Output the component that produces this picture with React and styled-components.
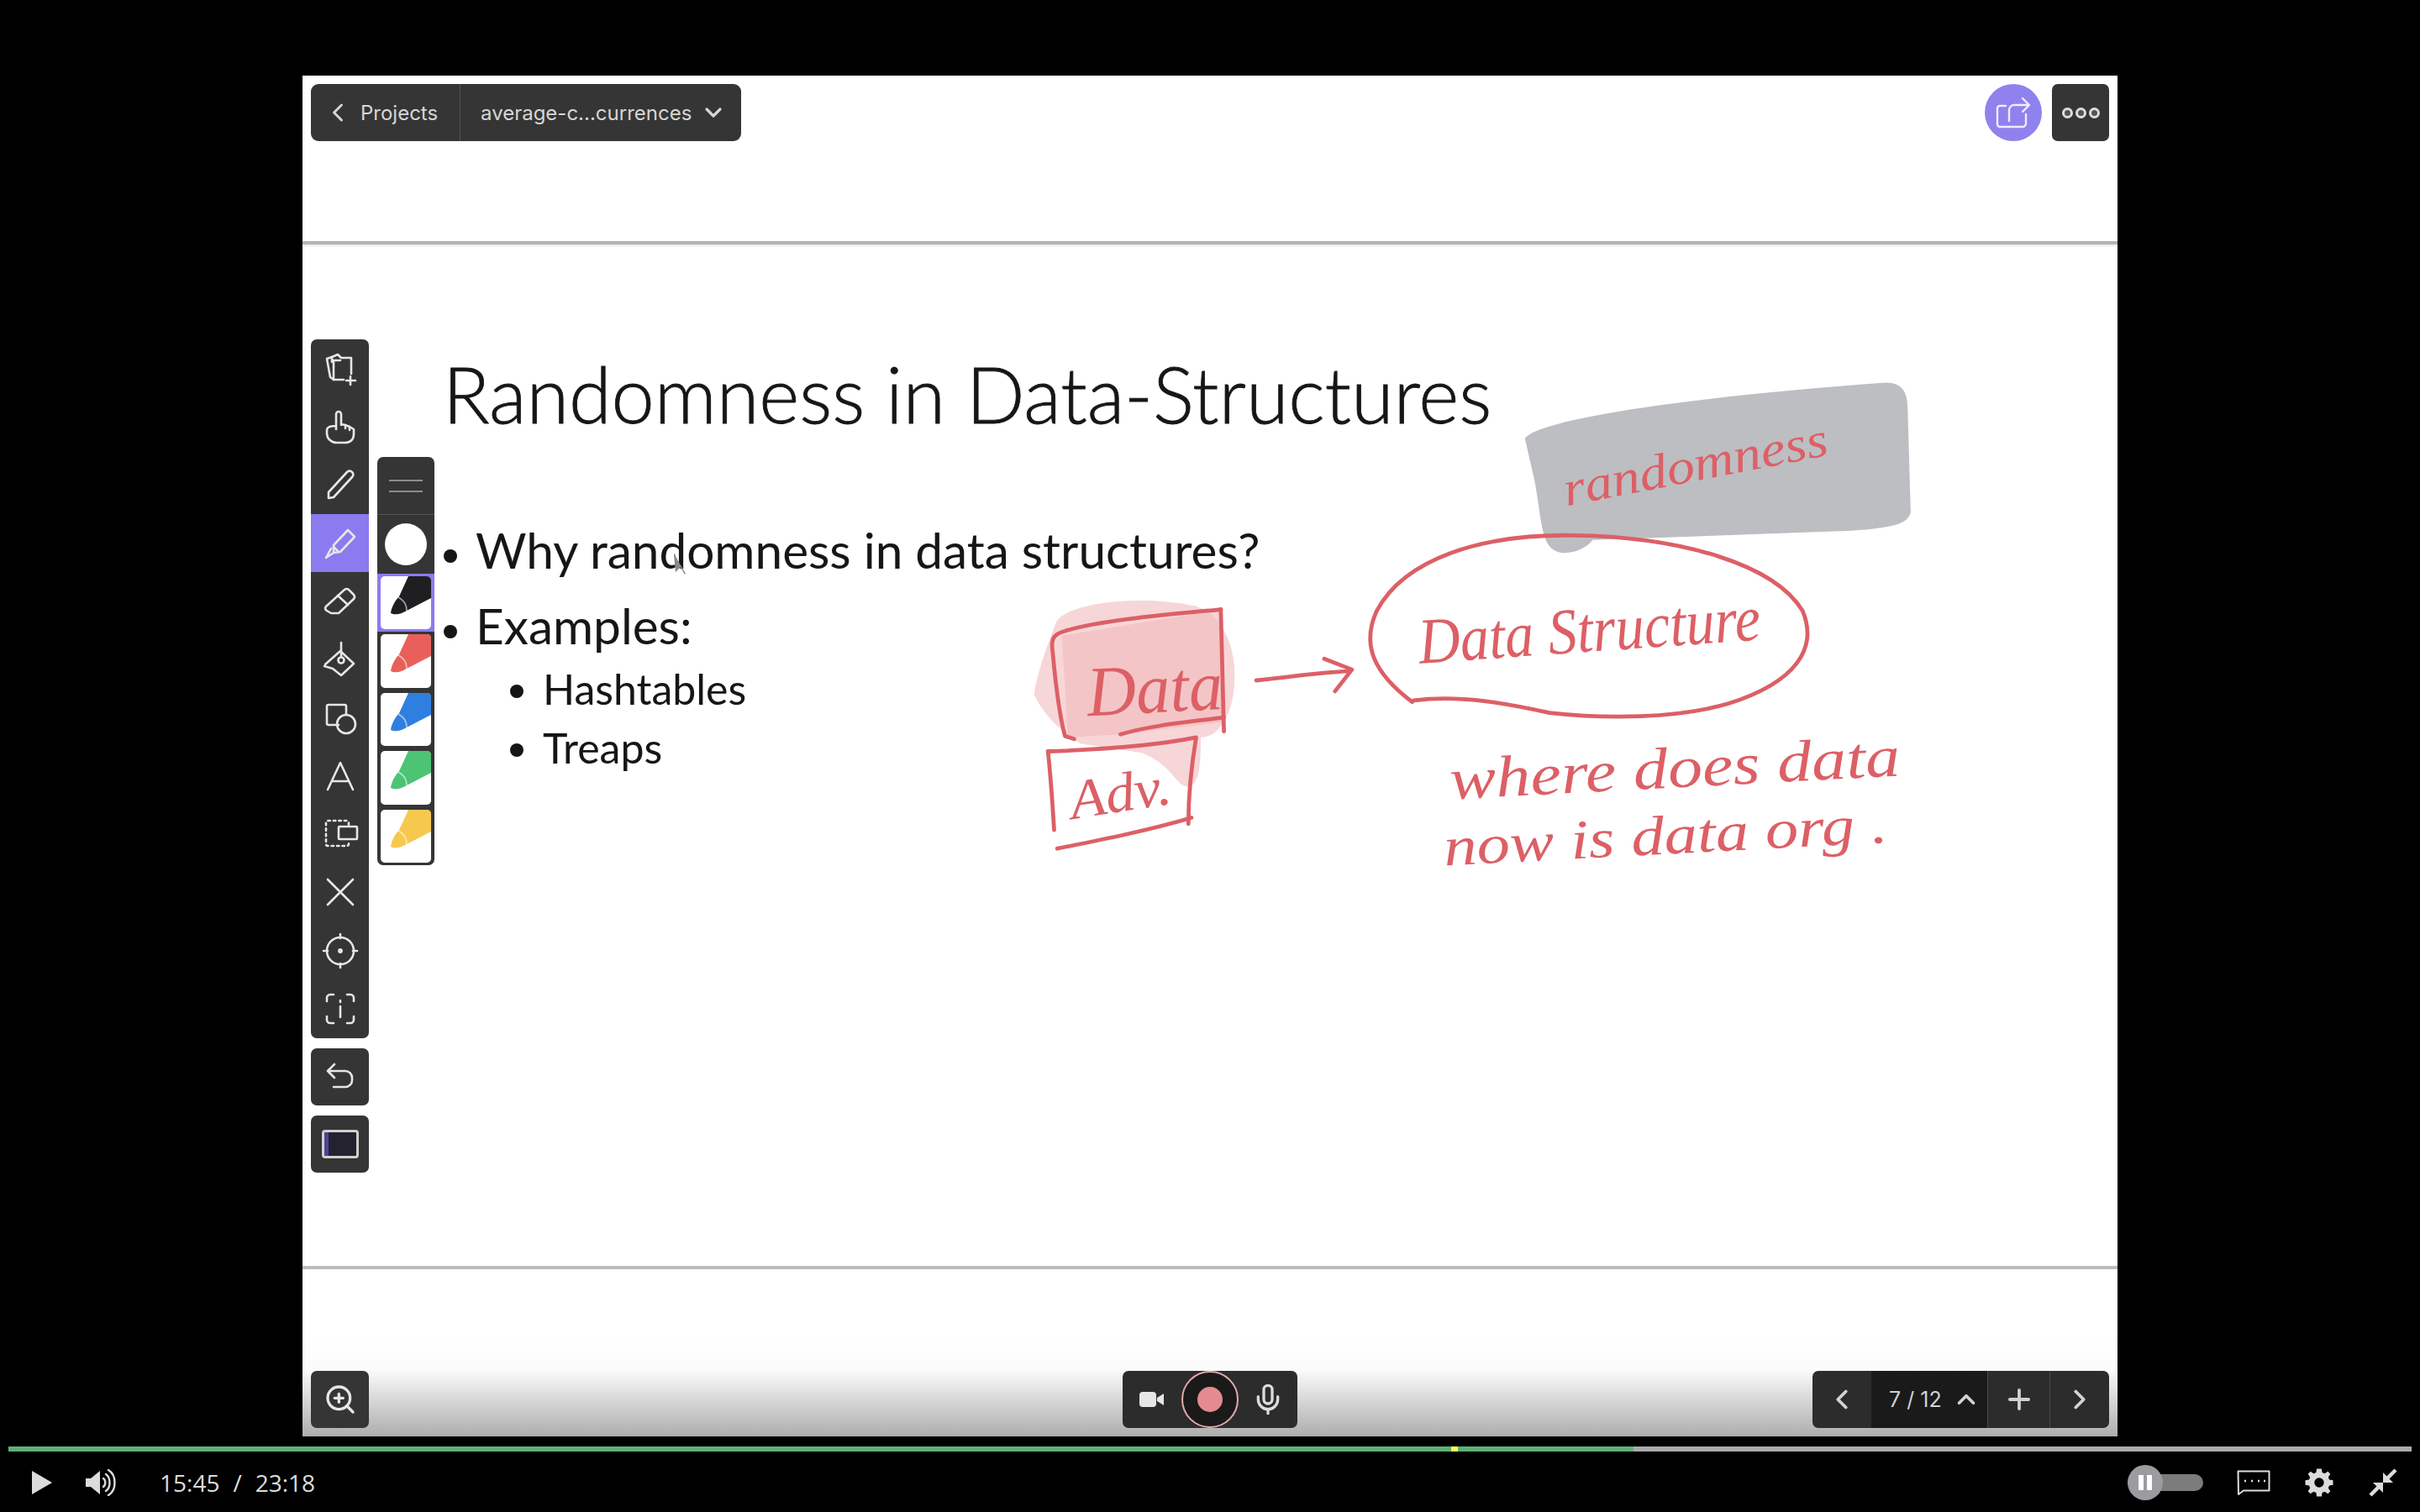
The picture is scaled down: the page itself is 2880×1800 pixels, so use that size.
import React from "react";
import styled, { createGlobalStyle } from "styled-components";
import { ChevronLeft, ChevronRight, ChevronDown, ChevronUp, Plus, ZoomIn, Mic } from "lucide-react";

const GlobalStyle = createGlobalStyle`
  html, body {
    margin: 0;
    padding: 0;
    background: #000;
  }
`;

const TOOLS = ["files", "hand", "pencil", "marker", "eraser", "fill", "shapes", "text", "select", "cross", "target", "info"];
const MARKERS = ["#1f1f22", "#e9605a", "#2f7fe0", "#4cc474", "#f6c94e"];

function Icon({ children }) {
  return (
    <svg width="44" height="44" viewBox="0 0 44 44" fill="none" stroke="#e6e6e6" strokeWidth="2.6" strokeLinecap="round" strokeLinejoin="round">
      {children}
    </svg>
  );
}

function ToolIcon({ name }) {
  switch (name) {
    case "files":
      return (
        <Icon>
          <path d="M12 8 L6 10 L10 32 L14 35" />
          <path d="M12 14 V8 L19 5 L23 9 H35 V28" />
          <path d="M14 12 V35 H26" />
          <path d="M14 12 H22" />
          <path d="M34 31 V41 M29 36 H40" />
        </Icon>
      );
    case "hand":
      return (
        <Icon>
          <path d="M17 25 V7 a3 3 0 0 1 6 0 V20 M23 19 l5 1 l5 2 l5 3 V31 C38 37 34 41 28 41 H18 C11 41 6 36 6 30 V26 C6 23 10 21 17 21" />
          <path d="M28 20 V24 M33 22 V26" />
        </Icon>
      );
    case "pencil":
      return (
        <Icon>
          <path d="M8 31 L30 7 a4 4 0 0 1 6 0 a4 4 0 0 1 0 6 L14 37 L8 38 Z" />
        </Icon>
      );
    case "marker":
      return (
        <Icon>
          <path d="M14 24 L31 6 L39 14 L22 32 L14 33 Z" />
          <path d="M14 26 L20 32 M14 33 L5 39 L11 28" />
        </Icon>
      );
    case "eraser":
      return (
        <Icon>
          <path d="M5 28 L27 8 a4 4 0 0 1 5 0 L38 14 a4 4 0 0 1 0 5 L20 36 H11 L6 33 a3 3 0 0 1 -1 -5 Z" />
          <path d="M19 15 L31 26" />
        </Icon>
      );
    case "fill":
      return (
        <Icon>
          <path d="M23 2 V18" />
          <path d="M4 28 L22 12 L38 27 L23 41 L13 33 L3 30" />
          <circle cx="23" cy="23" r="3.5" />
        </Icon>
      );
    case "shapes":
      return (
        <Icon>
          <path d="M20 31 H8 a2 2 0 0 1 -2 -2 V9 a2 2 0 0 1 2 -2 H27 a2 2 0 0 1 2 2 V19" />
          <circle cx="29" cy="30" r="11" />
        </Icon>
      );
    case "text":
      return (
        <Icon>
          <path d="M7 38 L22 6 L37 38 M12 28 H32" />
        </Icon>
      );
    case "select":
      return (
        <Icon>
          <path d="M32 11 V8 a2 2 0 0 0 -2 -2 H7 a2 2 0 0 0 -2 2 V34 a2 2 0 0 0 2 2 H30 a2 2 0 0 0 2 -2 V31" strokeDasharray="2.5 4" />
          <rect x="20" y="13" width="22" height="15" rx="1" />
        </Icon>
      );
    case "cross":
      return (
        <Icon>
          <path d="M7 7 L37 37 M37 7 L7 37" />
        </Icon>
      );
    case "target":
      return (
        <Icon>
          <circle cx="22" cy="22" r="16" />
          <path d="M22 2 V7 M22 37 V42 M2 22 H7 M37 22 H42" />
          <circle cx="22" cy="22" r="1.6" fill="#e6e6e6" />
        </Icon>
      );
    default:
      return (
        <Icon>
          <path d="M6 13 V9 a4 4 0 0 1 4 -4 H14 M30 5 H34 a4 4 0 0 1 4 4 V13 M38 31 V35 a4 4 0 0 1 -4 4 H30 M14 39 H10 a4 4 0 0 1 -4 -4 V31" />
          <path d="M22 19 V32 M22 12 V14" />
        </Icon>
      );
  }
}

function MarkerTip({ color }) {
  return (
    <svg width="60" height="60" viewBox="0 0 60 60">
      <path d="M12 44 C13 36 18 28 22 24 L33 0 H60 V26 L31 41 C26 44 18 47 12 44 Z" fill={color} />
      <path d="M21 25 C27 28 31 33 31 41" fill="none" stroke="#fff" strokeOpacity="0.6" strokeWidth="1.6" />
    </svg>
  );
}

function Ink() {
  return (
    <InkCanvas viewBox="196 49 1176 882">
      <path
        d="M988 284 C1000 270 1110 256 1222 248 C1232 248 1236 254 1236 264 L1238 332 C1236 340 1226 342 1200 344 L1032 350 C1026 358 1010 362 1004 354 C998 346 998 330 994 310 Z"
        fill="#bdbec2"
      />
      <path
        d="M684 404 C690 390 740 386 770 392 C790 394 800 416 800 438 C800 462 790 478 778 478 C778 492 778 508 770 510 C762 510 760 496 740 488 L700 482 C690 476 676 464 670 450 C672 436 678 420 684 404 Z"
        fill="#f7d6d8"
      />
      <path d="M688 412 L792 395 L793 468 L726 476 L692 478 Z" fill="#f2b9bb" fillOpacity="0.6" />
      <InkStroke d="M791 395 C760 398 712 402 690 409 C682 411 681 415 682 422 C684 444 686 462 690 477 L696 479" />
      <InkStroke d="M791 395 L793 474" />
      <InkStroke d="M726 476 C746 470 770 468 793 465" />
      <InkStroke d="M679 487 C710 486 745 484 775 478 C772 496 770 516 770 534" />
      <InkStroke d="M679 487 C681 505 682 522 683 538" />
      <InkStroke d="M685 550 C715 544 745 538 772 530" />
      <InkStroke d="M814 441 C834 439 855 436 874 435 M858 427 L876 434 L865 448" />
      <InkStroke d="M915 455 C890 436 882 418 892 396 C910 362 960 346 1020 347 C1090 348 1150 366 1168 396 C1178 420 1164 442 1120 456 C1086 466 1040 466 1004 462 C976 456 946 450 916 454" />
      <InkText x="1015" y="328" textLength="174" rotate={-11} size={32}>randomness</InkText>
      <InkText x="920" y="430" textLength="222" rotate={-4} size={42}>Data Structure</InkText>
      <InkText x="705" y="464" textLength="88" rotate={-3} size={46}>Data</InkText>
      <InkText x="695" y="531" textLength="66" rotate={-9} size={36}>Adv.</InkText>
      <InkText x="940" y="518" textLength="292" rotate={-3} size={38}>where does data</InkText>
      <InkText x="936" y="561" textLength="288" rotate={-3} size={36}>now is data org .</InkText>
      <path d="M437 359 L438 370 L441 367 L444 372" fill="#8a8a8a" stroke="#8a8a8a" strokeWidth="0.8" />
    </InkCanvas>
  );
}

export default function App() {
  return (
    <Page>
      <GlobalStyle />
      <Frame>
        <TopArea>
          <BreadCrumb>
            <BackPart>
              <ChevronLeft size={36} strokeWidth={2} />
              <span>Projects</span>
            </BackPart>
            <FilePart>
              <span>average-c...currences</span>
              <ChevronDown size={32} strokeWidth={2.4} />
            </FilePart>
          </BreadCrumb>
          <TopActions>
            <ShareButton>
              <svg width="44" height="44" viewBox="0 0 44 44" fill="none" stroke="#efecff" strokeWidth="2.4" strokeLinecap="round" strokeLinejoin="round">
                <path d="M13 14 H6 a3 3 0 0 0 -3 3 V36 a3 3 0 0 0 3 3 H33 a4 4 0 0 0 4 -4 V24" />
                <path d="M17 32 V19 a6 6 0 0 1 6 -6 H40 M33 5 L41 13 L33 21" />
              </svg>
            </ShareButton>
            <MoreButton>
              <Dot />
              <Dot />
              <Dot />
            </MoreButton>
          </TopActions>
        </TopArea>

        <Middle>
          <Toolbars>
            <ToolColumn>
              <ToolStack>
                {TOOLS.map((name) => (
                  <ToolSlot key={name} $active={name === "marker"}>
                    <ToolIcon name={name} />
                  </ToolSlot>
                ))}
              </ToolStack>
              <SquareButton>
                <Icon>
                  <path d="M7 15 L15 7 M7 15 L15 23 M7 15 H28 a8 8 0 0 1 8 8 V26 a8 8 0 0 1 -8 8 H14" />
                </Icon>
              </SquareButton>
              <SquareButton>
                <FitIcon>
                  <FitMark />
                </FitIcon>
              </SquareButton>
            </ToolColumn>
            <ColorPanel>
              <PanelHeader>
                <WidthLine />
                <WidthLine />
              </PanelHeader>
              <PanelRow>
                <WhiteDot />
              </PanelRow>
              {MARKERS.map((color, i) => (
                <PanelRow key={color} $selected={i === 0}>
                  <MarkerCard>
                    <MarkerTip color={color} />
                  </MarkerCard>
                </PanelRow>
              ))}
            </ColorPanel>
          </Toolbars>

          <Slide>
            <Title>Randomness in Data-Structures</Title>
            <BulletList>
              <Bullet>Why randomness in data structures?</Bullet>
              <Bullet>Examples:</Bullet>
            </BulletList>
            <SubList>
              <SubBullet>Hashtables</SubBullet>
              <SubBullet>Treaps</SubBullet>
            </SubList>
          </Slide>
        </Middle>

        <BottomArea>
          <SquareButton>
            <ZoomIn size={40} strokeWidth={2} />
          </SquareButton>
          <RecordBar>
            <svg width="32" height="24" viewBox="0 0 32 24">
              <rect x="1" y="3" width="20" height="18" rx="4" fill="#e6e6e6" />
              <path d="M22 10 L30 5 V19 L22 14 Z" fill="#e6e6e6" />
            </svg>
            <RecordRing>
              <RecordDot />
            </RecordRing>
            <Mic size={40} strokeWidth={2} />
          </RecordBar>
          <PageNav>
            <NavCell $width={70}>
              <ChevronLeft size={38} strokeWidth={2.4} />
            </NavCell>
            <PageCell>
              <span>7 / 12</span>
              <ChevronUp size={34} strokeWidth={2.6} />
            </PageCell>
            <NavCell $width={73}>
              <Plus size={38} strokeWidth={2.4} />
            </NavCell>
            <NavCell $width={70}>
              <ChevronRight size={38} strokeWidth={2.4} />
            </NavCell>
          </PageNav>
        </BottomArea>
        <Ink />
      </Frame>

      <Player>
        <Progress>
          <Played />
          <Chapter />
          <Buffered />
        </Progress>
        <Controls>
          <svg width="26" height="30" viewBox="0 0 26 30">
            <path d="M1 1 L25 15 L1 29 Z" fill="#dcdcdc" />
          </svg>
          <SpeakerWrap>
            <svg width="38" height="32" viewBox="0 0 38 32" fill="none" stroke="#dcdcdc" strokeWidth="2.4" strokeLinecap="round">
              <path d="M1 11 H7 L18 2 V30 L7 21 H1 Z" fill="#dcdcdc" stroke="none" />
              <path d="M22 11 C25 13 25 19 22 21 M25 6 C31 10 31 22 25 26 M28 1 C38 7 38 25 28 31" />
            </svg>
          </SpeakerWrap>
          <TimeText>
            <span>15:45</span>
            <span>/</span>
            <span>23:18</span>
          </TimeText>
          <RightControls>
            <AutoToggle>
              <ToggleKnob>
                <PauseBar />
                <PauseBar />
              </ToggleKnob>
            </AutoToggle>
            <svg width="40" height="30" viewBox="0 0 40 30" fill="none">
              <path d="M1.5 1.5 H38.5 V24.5 H8 L2 29 Z" stroke="#dcdcdc" strokeWidth="2" strokeLinejoin="round" />
              <path d="M9 13 h2 M17 13 h2 M25 13 h2 M32 13 h2" stroke="#dcdcdc" strokeWidth="2.6" />
            </svg>
            <svg width="36" height="36" viewBox="0 0 24 24" fill="#dcdcdc">
              <path d="M13.9 1 L14.4 4 L16.4 4.8 L18.9 3.1 L20.9 5.1 L19.2 7.6 L20 9.6 L23 10.1 V13.9 L20 14.4 L19.2 16.4 L20.9 18.9 L18.9 20.9 L16.4 19.2 L14.4 20 L13.9 23 H10.1 L9.6 20 L7.6 19.2 L5.1 20.9 L3.1 18.9 L4.8 16.4 L4 14.4 L1 13.9 V10.1 L4 9.6 L4.8 7.6 L3.1 5.1 L5.1 3.1 L7.6 4.8 L9.6 4 L10.1 1 Z M12 8.2 A3.8 3.8 0 1 0 12 15.8 A3.8 3.8 0 1 0 12 8.2 Z" fillRule="evenodd" />
            </svg>
            <svg width="36" height="36" viewBox="0 0 36 36" fill="#dcdcdc" stroke="#dcdcdc">
              <path d="M33 3 L22 14" strokeWidth="4.5" />
              <path d="M18 6 V18 H30 Z" stroke="none" />
              <path d="M3 33 L14 22" strokeWidth="4.5" />
              <path d="M6 18 H18 V30 Z" stroke="none" />
            </svg>
          </RightControls>
        </Controls>
      </Player>
    </Page>
  );
}

const Page = styled.div`
  width: 2880px;
  height: 1800px;
  overflow: hidden;
  background: #000;
  display: flex;
  flex-direction: column;
  align-items: center;
  padding-top: 90px;
  box-sizing: border-box;
`;

const Frame = styled.div`
  position: relative;
  width: 2160px;
  height: 1620px;
  background: #fff;
  display: flex;
  flex-direction: column;
  flex-shrink: 0;
`;

const TopArea = styled.div`
  height: 201px;
  flex-shrink: 0;
  box-sizing: border-box;
  padding: 10px 10px 0;
  display: flex;
  justify-content: space-between;
  align-items: flex-start;
  border-bottom: 4px solid #b4b4b4;
  box-shadow: 0 1px 3px rgba(0, 0, 0, 0.15);
`;

const BreadCrumb = styled.div`
  display: flex;
  height: 68px;
  background: #353535;
  border-radius: 9px;
  color: #d6d6d6;
  font-family: "Inter", "Liberation Sans", sans-serif;
  font-size: 24px;
`;

const BackPart = styled.div`
  width: 178px;
  box-sizing: border-box;
  display: flex;
  align-items: center;
  gap: 9px;
  padding-left: 14px;
  border-right: 1px solid #555;
`;

const FilePart = styled.div`
  display: flex;
  align-items: center;
  gap: 10px;
  padding: 0 17px 0 24px;
`;

const TopActions = styled.div`
  display: flex;
  align-items: center;
  gap: 12px;
`;

const ShareButton = styled.div`
  width: 68px;
  height: 68px;
  border-radius: 50%;
  background: #8f82ee;
  display: flex;
  align-items: center;
  justify-content: center;
`;

const MoreButton = styled.div`
  width: 68px;
  height: 68px;
  border-radius: 7px;
  background: #353535;
  display: flex;
  align-items: center;
  justify-content: center;
  gap: 3px;
`;

const Dot = styled.span`
  width: 7px;
  height: 7px;
  border-radius: 50%;
  background: #555;
  border: 3px solid #ddd;
`;

const Middle = styled.div`
  flex: 1;
  min-height: 0;
  display: flex;
  gap: 10px;
  padding-left: 10px;
  border-bottom: 4px solid #bcbcbc;
`;

const Toolbars = styled.div`
  display: flex;
  gap: 10px;
  align-items: flex-start;
  padding-top: 113px;
`;

const ToolColumn = styled.div`
  display: flex;
  flex-direction: column;
  gap: 12px;
`;

const ToolStack = styled.div`
  width: 69px;
  background: #353535;
  border-radius: 7px;
  overflow: hidden;
  display: flex;
  flex-direction: column;
`;

const ToolSlot = styled.div`
  height: 69.3px;
  display: flex;
  align-items: center;
  justify-content: center;
  background: ${(p) => (p.$active ? "#8a7bf0" : "transparent")};
`;

const SquareButton = styled.div`
  width: 69px;
  height: 68px;
  border-radius: 7px;
  background: #353535;
  color: #e6e6e6;
  display: flex;
  align-items: center;
  justify-content: center;
`;

const FitIcon = styled.div`
  width: 38px;
  height: 28px;
  border: 3px solid #d0d0d0;
  border-radius: 4px;
  background: #23222e;
  display: flex;
`;

const FitMark = styled.div`
  width: 5px;
  background: #4b4496;
`;

const ColorPanel = styled.div`
  width: 68px;
  margin-top: 140px;
  background: #353535;
  border-radius: 7px;
  overflow: hidden;
  display: flex;
  flex-direction: column;
`;

const PanelHeader = styled.div`
  height: 69px;
  box-sizing: border-box;
  border-bottom: 1px solid #555;
  display: flex;
  flex-direction: column;
  align-items: center;
  justify-content: center;
  gap: 11px;
`;

const WidthLine = styled.div`
  width: 40px;
  height: 2px;
  background: #8c8c8c;
`;

const PanelRow = styled.div`
  height: 69.5px;
  box-sizing: border-box;
  display: flex;
  align-items: center;
  justify-content: center;
  padding: 3px 4px;
  background: ${(p) => (p.$selected ? "#8a7bf0" : "transparent")};
`;

const WhiteDot = styled.div`
  width: 50px;
  height: 50px;
  border-radius: 50%;
  background: #fff;
`;

const MarkerCard = styled.div`
  width: 100%;
  height: 100%;
  background: #fff;
  border-radius: 5px;
  overflow: hidden;
  display: flex;
`;

const Slide = styled.div`
  flex: 1;
  display: flex;
  flex-direction: column;
  color: #161616;
  font-family: "Lato", "Liberation Sans", sans-serif;
`;

const Title = styled.h1`
  margin: 128px 0 0;
  font-size: 92px;
  line-height: 100px;
  font-weight: 300;
  white-space: nowrap;
  letter-spacing: -0.1px;
  -webkit-text-stroke: 0.8px #161616;
`;

const BulletList = styled.ul`
  margin: 90px 0 0;
  padding: 0 0 0 39px;
  font-size: 58.5px;
  line-height: 90px;
`;

const Bullet = styled.li`
  &::marker {
    font-size: 48px;
  }
`;

const SubList = styled.ul`
  margin: -4px 0 0;
  padding: 0 0 0 119px;
  font-size: 50px;
  line-height: 70px;
`;

const SubBullet = styled.li``;

const BottomArea = styled.div`
  height: 199px;
  flex-shrink: 0;
  box-sizing: border-box;
  padding: 0 10px 10px;
  display: grid;
  grid-template-columns: 1fr auto 1fr;
  align-items: end;
  justify-items: start;
  background: linear-gradient(to bottom, #fff 40%, #fbfbfb 60%, #adadad 100%);
`;

const RecordBar = styled.div`
  width: 208px;
  height: 68px;
  border-radius: 7px;
  background: #2c2c2c;
  color: #dcdcdc;
  display: grid;
  grid-template-columns: 1fr 68px 1fr;
  align-items: center;
  justify-items: center;
`;

const RecordRing = styled.div`
  width: 68px;
  height: 68px;
  box-sizing: border-box;
  border-radius: 50%;
  border: 2px solid #e7a8ad;
  background: #1a1a1a;
  display: flex;
  align-items: center;
  justify-content: center;
`;

const RecordDot = styled.div`
  width: 30px;
  height: 30px;
  border-radius: 50%;
  background: #e58a90;
`;

const PageNav = styled.div`
  display: flex;
  justify-self: end;
  height: 68px;
  border-radius: 7px;
  overflow: hidden;
  background: #2c2c2c;
  color: #d2d2d2;
`;

const NavCell = styled.div`
  width: ${(p) => p.$width}px;
  display: flex;
  align-items: center;
  justify-content: center;
  border-left: 1px solid #4a4a4a;
  &:first-child {
    border-left: none;
  }
`;

const PageCell = styled.div`
  width: 138px;
  box-sizing: border-box;
  padding-left: 21px;
  display: flex;
  align-items: center;
  gap: 12px;
  background: #1a1a1a;
  font-family: "Inter", "Liberation Sans", sans-serif;
  font-size: 25px;
  white-space: nowrap;
`;

const InkCanvas = styled.svg`
  position: absolute;
  inset: 0;
  width: 2160px;
  height: 1620px;
  pointer-events: none;
`;

const InkStroke = styled.path`
  fill: none;
  stroke: #dc6066;
  stroke-width: 2.6;
  stroke-linecap: round;
  stroke-linejoin: round;
`;

function InkText({ x, y, rotate, size, textLength, children }) {
  return (
    <InkLabel
      x={x}
      y={y}
      fontSize={size}
      textLength={textLength}
      lengthAdjust="spacingAndGlyphs"
      transform={`rotate(${rotate} ${x} ${y})`}
    >
      {children}
    </InkLabel>
  );
}

const InkLabel = styled.text`
  font-family: "Liberation Serif", serif;
  font-style: italic;
  fill: #dc6066;
`;

const Player = styled.div`
  width: 2880px;
  flex: 1;
  box-sizing: border-box;
  padding-top: 12px;
`;

const Progress = styled.div`
  margin: 0 10px;
  height: 6px;
  display: flex;
  background: #aaa;
`;

const Played = styled.div`
  width: 1717px;
  background: #5fb077;
`;

const Chapter = styled.div`
  width: 8px;
  background: #ffff55;
`;

const Buffered = styled.div`
  width: 209px;
  background: #5fb077;
`;

const Controls = styled.div`
  height: 74px;
  display: flex;
  align-items: center;
  padding: 0 26px 0 37px;
  color: #dcdcdc;
  font-family: "Open Sans", "Noto Sans", sans-serif;
`;

const SpeakerWrap = styled.div`
  margin-left: 38px;
  display: flex;
`;

const TimeText = styled.div`
  margin-left: 51px;
  display: flex;
  font-size: 28px;
  gap: 16px;
`;

const RightControls = styled.div`
  margin-left: auto;
  display: flex;
  align-items: center;
  gap: 40px;
`;

const AutoToggle = styled.div`
  width: 90px;
  height: 20px;
  border-radius: 10px;
  background: #7c7c7c;
  display: flex;
  align-items: center;
`;

const ToggleKnob = styled.div`
  width: 42px;
  height: 42px;
  border-radius: 50%;
  background: #9b9ba0;
  display: flex;
  align-items: center;
  justify-content: center;
  gap: 4px;
`;

const PauseBar = styled.div`
  width: 6px;
  height: 18px;
  background: #fff;
`;
